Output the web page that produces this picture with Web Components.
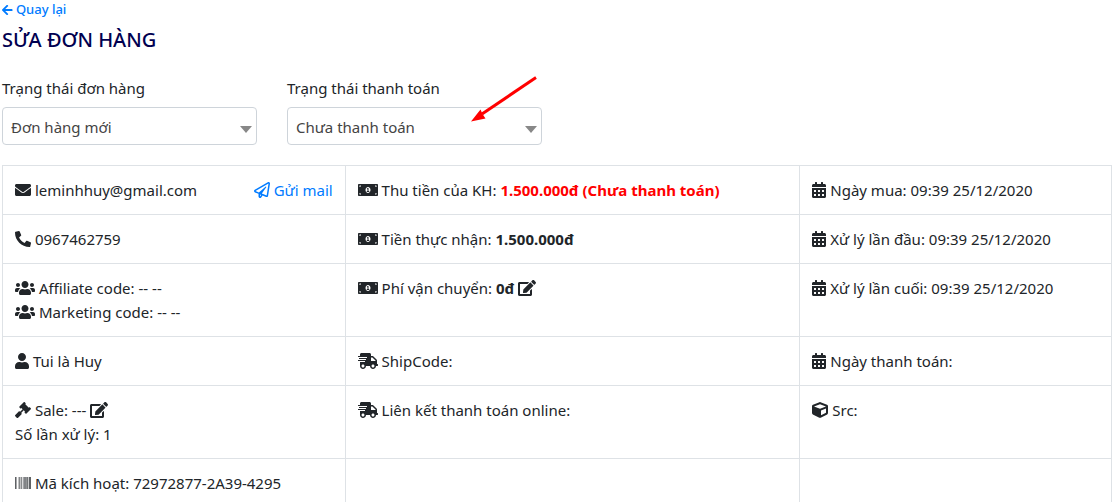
<!DOCTYPE html>
<html lang="vi">
<head>
<meta charset="utf-8">
<meta name="viewport" content="width=device-width, initial-scale=1">
<title>Sửa đơn hàng</title>
<style>
html { scrollbar-width: none; }
body { margin: 0; background: #fff; color: #212529; font: 15px/24px "Noto Sans", "Open Sans", sans-serif; }
</style>
</head>
<body>
<order-page></order-page>
<script>
const ICONS = {
  arrow: [448, 'M257.5 445.1l-22.2 22.2c-9.4 9.4-24.6 9.4-33.9 0L7 273c-9.4-9.4-9.4-24.6 0-33.9L201.4 44.7c9.4-9.4 24.6-9.4 33.9 0l22.2 22.2c9.5 9.5 9.3 25-.4 34.3L136.600 216H424c13.300 0 24 10.700 24 24v32c0 13.300-10.700 24-24 24H136.600l120.500 114.800c9.800 9.300 10 24.800.4 34.300z'],
  envelope: [512, 'M502.3 190.8c3.900-3.100 9.700-.2 9.700 4.700V400c0 26.500-21.500 48-48 48H48c-26.500 0-48-21.500-48-48V195.600c0-5 5.700-7.800 9.700-4.700 22.400 17.400 52.100 39.500 154.100 113.600 21.100 15.400 56.700 47.800 92.200 47.600 35.700.3 72-32.800 92.300-47.600 102-74.100 131.600-96.300 154-113.700zM256 320c23.200.4 56.600-29.200 73.400-41.400 132.700-96.300 142.800-104.700 173.400-128.700 5.800-4.500 9.200-11.500 9.200-18.900v-19c0-26.500-21.500-48-48-48H48c-26.500 0-48 21.500-48 48v19c0 7.400 3.400 14.300 9.200 18.900 30.600 23.900 40.700 32.400 173.400 128.700 16.800 12.200 50.200 41.800 73.400 41.400z'],
  plane: [512, 'M440 6.500L24 246.400c-34.400 19.900-31.100 70.800 5.700 85.900L144 379.600V464c0 46.400 59.200 65.500 86.600 28.600l43.800-59.100 111.900 46.200c5.900 2.400 12.100 3.600 18.300 3.600 8.200 0 16.300-2.100 23.600-6.200 12.800-7.200 21.600-20 23.900-34.500l59.400-387.200c6.100-40.100-36.900-68.800-71.500-48.900zM192 464v-64.600l36.600 15.100L192 464zm212.600-28.700l-153.800-63.500L391 169.500c10.700-15.500-9.500-33.500-23.700-21.200L155.800 332.600 48 288 464 48l-59.400 387.300z'],
  phone: [512, 'M493.400 24.600l-104-24c-11.300-2.600-22.900 3.300-27.500 13.900l-48 112c-4.200 9.800-1.400 21.300 6.900 28l60.600 49.600c-36 76.700-98.900 140.500-177.200 177.200l-49.600-60.600c-6.800-8.300-18.200-11.100-28-6.900l-112 48C3.900 366.500-2 378.100.6 389.400l24 104C27.100 504.200 36.700 512 48 512c256.100 0 464-207.500 464-464 0-11.200-7.700-20.900-18.600-23.400z', 'flip'],
  users: [640, 'M96 224c35.300 0 64-28.700 64-64s-28.700-64-64-64-64 28.700-64 64 28.700 64 64 64zm448 0c35.300 0 64-28.700 64-64s-28.700-64-64-64-64 28.700-64 64 28.700 64 64 64zm32 32h-64c-17.600 0-33.500 7.100-45.100 18.600 40.300 22.100 68.900 62 75.100 109.400h66c17.700 0 32-14.300 32-32v-32c0-35.300-28.700-64-64-64zm-256 0c61.900 0 112-50.100 112-112S381.900 32 320 32 208 82.100 208 144s50.100 112 112 112zm76.800 32h-8.300c-20.800 10-43.900 16-68.500 16s-47.600-6-68.500-16h-8.300C179.600 288 128 339.600 128 403.200V432c0 26.500 21.500 48 48 48h288c26.500 0 48-21.500 48-48v-28.800c0-63.600-51.600-115.200-115.200-115.200zm-223.700-13.400C161.500 263.100 145.600 256 128 256H64c-35.300 0-64 28.700-64 64v32c0 17.700 14.300 32 32 32h65.900c6.300-47.400 34.900-87.300 75.200-109.400z'],
  user: [448, 'M224 256c70.700 0 128-57.300 128-128S294.700 0 224 0 96 57.300 96 128s57.300 128 128 128zm89.600 32h-16.700c-22.200 10.200-46.900 16-72.900 16s-50.600-5.800-72.900-16h-16.700C60.200 288 0 348.200 0 422.400V464c0 26.500 21.500 48 48 48h352c26.500 0 48-21.500 48-48v-41.600c0-74.200-60.200-134.400-134.400-134.400z'],
  gavel: [512, 'M504.970 199.360l-22.630-22.630c-9.370-9.370-24.570-9.370-33.940 0l-5.660 5.660-113.130-113.130 5.660-5.660c9.370-9.370 9.370-24.570 0-33.940L312.640 7.030c-9.370-9.370-24.570-9.370-33.940 0L142.920 142.820c-9.370 9.370-9.370 24.570 0 33.940l22.630 22.630c9.370 9.370 24.570 9.370 33.940 0l5.660-5.660 39.600 39.600-81.040 81.040-5.660-5.660c-12.500-12.500-32.760-12.500-45.250 0L9.370 412.120c-12.500 12.500-12.500 32.760 0 45.250l45.250 45.250c12.500 12.500 32.760 12.500 45.250 0l103.430-103.430c12.500-12.500 12.500-32.760 0-45.250l-5.660-5.660 81.040-81.040 39.600 39.600-5.660 5.660c-9.370 9.370-9.370 24.570 0 33.940l22.630 22.630c9.370 9.370 24.570 9.370 33.940 0L504.970 233.300c9.370-9.370 9.370-24.560 0-33.940z'],
  edit: [576, 'M402.600 83.200l90.200 90.200c3.800 3.800 3.800 10 0 13.800L274.400 405.600l-92.800 10.300c-12.400 1.400-22.900-9.100-21.500-21.500l10.300-92.800L388.800 83.200c3.800-3.800 10-3.800 13.800 0zm162-22.900l-48.800-48.800c-15.200-15.200-39.900-15.200-55.200 0l-35.400 35.400c-3.800 3.800-3.800 10 0 13.800l90.200 90.200c3.800 3.800 10 3.800 13.800 0l35.400-35.400c15.200-15.300 15.200-40 0-55.200zM384 346.200V448H64V128h229.800c3.200 0 6.200-1.300 8.500-3.500l40-40c7.600-7.600 2.200-20.500-8.500-20.500H48C21.500 64 0 85.500 0 112v352c0 26.500 21.500 48 48 48h352c26.500 0 48-21.500 48-48V306.200c0-10.700-12.900-16-20.500-8.500l-40 40c-2.200 2.300-3.500 5.300-3.500 8.500z'],
  barcode: [512, 'M0 448V64h18v384H0zm26.857-.273V64H36v383.727h-9.143zm27.143 0V64h8.857v383.727H54zm44.857 0V64h8.857v383.727h-8.857zm36 0V64h17.714v383.727h-17.714zm44.857 0V64h8.857v383.727h-8.857zm18 0V64h8.857v383.727h-8.857zm18 0V64h8.857v383.727h-8.857zm35.715 0V64h18v383.727h-18zm44.857 0V64h18v383.727h-18zm35.999 0V64h18.001v383.727h-18.001zm36.001 0V64h18.001v383.727h-18.001zm26.857 0V64h18v383.727h-18zm45.143 0V64h26.857v383.727h-26.857zm35.714 0V64h9.143v383.727H476zm18 .273V64h18v384h-18z'],
  money: [640, 'M608 64H32C14.330 64 0 78.330 0 96v320c0 17.670 14.330 32 32 32h576c17.670 0 32-14.330 32-32V96c0-17.670-14.330-32-32-32zM48 400v-50c28 0 50 22 50 50H48zm0-238v-50h50c0 28-22 50-50 50zm272 190c-44.190 0-80-42.990-80-96 0-53.020 35.820-96 80-96s80 42.980 80 96c0 53.030-35.830 96-80 96zm272 48h-50c0-28 22-50 50-50v50zm0-238c-28 0-50-22-50-50h50v50zM352 288h-16v-88c0-4.420-3.580-8-8-8h-13.580c-4.740 0-9.370 1.400-13.310 4.030l-15.330 10.220a7.994 7.994 0 0 0-2.220 11.090l8.880 13.310a7.994 7.994 0 0 0 11.090 2.220l.47-.31V288h-16c-4.420 0-8 3.580-8 8v16c0 4.420 3.580 8 8 8h64c4.420 0 8-3.580 8-8v-16c0-4.420-3.580-8-8-8z'],
  truck: [640, 'M624 352h-16V243.900c0-12.700-5.100-24.900-14.100-33.900L494 110.100c-9-9-21.200-14.100-33.900-14.100H416V48c0-26.500-21.500-48-48-48H112C85.500 0 64 21.500 64 48v48H8c-4.400 0-8 3.600-8 8v16c0 4.400 3.600 8 8 8h272c4.400 0 8 3.600 8 8v16c0 4.400-3.600 8-8 8H40c-4.400 0-8 3.600-8 8v16c0 4.400 3.600 8 8 8h208c4.400 0 8 3.600 8 8v16c0 4.400-3.600 8-8 8H8c-4.400 0-8 3.600-8 8v16c0 4.400 3.600 8 8 8h208c4.400 0 8 3.600 8 8v16c0 4.400-3.600 8-8 8H64v128c0 53 43 96 96 96s96-43 96-96h128c0 53 43 96 96 96s96-43 96-96h48c8.800 0 16-7.200 16-16v-32c0-8.800-7.200-16-16-16zM160 464c-26.500 0-48-21.500-48-48s21.500-48 48-48 48 21.500 48 48-21.500 48-48 48zm320 0c-26.500 0-48-21.500-48-48s21.500-48 48-48 48 21.500 48 48-21.500 48-48 48zm80-208H416V144h44.100l99.900 99.900V256z'],
  calendar: [448, 'M0 464c0 26.500 21.500 48 48 48h352c26.500 0 48-21.500 48-48V192H0v272zm320-196c0-6.600 5.400-12 12-12h40c6.600 0 12 5.400 12 12v40c0 6.600-5.400 12-12 12h-40c-6.600 0-12-5.400-12-12v-40zm0 128c0-6.600 5.400-12 12-12h40c6.600 0 12 5.400 12 12v40c0 6.600-5.400 12-12 12h-40c-6.600 0-12-5.400-12-12v-40zM192 268c0-6.600 5.400-12 12-12h40c6.600 0 12 5.400 12 12v40c0 6.600-5.400 12-12 12h-40c-6.600 0-12-5.400-12-12v-40zm0 128c0-6.600 5.400-12 12-12h40c6.600 0 12 5.400 12 12v40c0 6.600-5.400 12-12 12h-40c-6.600 0-12-5.400-12-12v-40zM64 268c0-6.600 5.400-12 12-12h40c6.600 0 12 5.400 12 12v40c0 6.600-5.400 12-12 12H76c-6.600 0-12-5.400-12-12v-40zm0 128c0-6.600 5.400-12 12-12h40c6.600 0 12 5.400 12 12v40c0 6.600-5.400 12-12 12H76c-6.600 0-12-5.400-12-12v-40zM400 64h-48V16c0-8.800-7.200-16-16-16h-32c-8.800 0-16 7.200-16 16v48H160V16c0-8.800-7.200-16-16-16h-32c-8.800 0-16 7.200-16 16v48H48C21.500 64 0 85.500 0 112v48h448v-48c0-26.500-21.500-48-48-48z'],
  cube: [512, 'M239.100 6.300l-208 78c-18.700 7-31.100 25-31.100 45v225.100c0 18.200 10.300 34.800 26.500 42.900l208 104c13.500 6.800 29.400 6.800 42.900 0l208-104c16.300-8.100 26.500-24.800 26.500-42.900V129.300c0-20-12.400-37.900-31.100-44.900l-208-78C262 2.200 250 2.200 239.100 6.300zM256 68.400l192 72v1.100l-192 78-192-78v-1.100l192-72zm32 356V275.500l160-65v133.900l-160 80z']
};

class FaIcon extends HTMLElement {
  connectedCallback() {
    const [width, path, flip] = ICONS[this.getAttribute('name')];
    this.attachShadow({ mode: 'open' }).innerHTML = `
      <style>
        :host { display: inline-block; font-size: var(--icon-size, 16px); height: 1em; line-height: 1; vertical-align: -2px; }
        svg { display: block; height: 1em; fill: currentColor; }
        .flip { transform: scaleX(-1); }
      </style>
      <svg class="${flip || ''}" viewBox="0 0 ${width} 512" aria-hidden="true"><path d="${path}"/></svg>`;
  }
}
customElements.define('fa-icon', FaIcon);

class StatusField extends HTMLElement {
  connectedCallback() {
    const options = this.getAttribute('options').split('|').map(o => `<option>${o}</option>`).join('');
    this.attachShadow({ mode: 'open' }).innerHTML = `
      <style>
        :host { display: block; position: relative; }
        label { display: block; margin-bottom: 7px; }
        .box { display: grid; align-items: center; }
        .box > * { grid-area: 1 / 1; }
        select { appearance: none; box-sizing: border-box; width: 100%; height: 38px; margin: 0; padding: 2px 24px 0 8px;
          border: 1px solid #ced4da; border-radius: 4px; background: #fff; color: #444; font: inherit; }
        .caret { justify-self: end; margin: 6px 5px 0 0; border: 6px solid transparent; border-top: 7px solid #888;
          border-bottom: 0; pointer-events: none; }
      </style>
      <label for="status">${this.getAttribute('label')}</label>
      <div class="box"><select id="status">${options}</select><span class="caret"></span></div>
      <slot></slot>`;
  }
}
customElements.define('status-field', StatusField);

class PointerArrow extends HTMLElement {
  connectedCallback() {
    this.attachShadow({ mode: 'open' }).innerHTML = `
      <style>
        :host { display: block; position: absolute; top: 0; right: 4px; pointer-events: none; }
        svg { display: block; }
      </style>
      <svg width="68" height="48" viewBox="0 0 68 48" aria-hidden="true">
        <path d="M66 1.500L12 38" stroke="#f00" stroke-width="3"/>
        <path d="M1 45.500L10.500 33.500L12.500 38L15.500 42.500Z" fill="#f00"/>
      </svg>`;
  }
}
customElements.define('pointer-arrow', PointerArrow);

class OrderDetails extends HTMLElement {
  connectedCallback() {
    this.attachShadow({ mode: 'open' }).innerHTML = `
      <style>
        :host { display: block; }
        table { width: 100%; table-layout: fixed; border-collapse: collapse; }
        .contact { width: 30.9%; }
        .dates { width: 28.1%; }
        td { padding: 12px; border: 1px solid #dee2e6; vertical-align: top; }
        .split { display: flex; justify-content: space-between; }
        a { color: #007bff; text-decoration: none; }
        .due { color: #f00; }
        button { padding: 0; border: 0; background: none; color: inherit; font: inherit; cursor: pointer; }
      </style>
      <table>
        <colgroup><col class="contact"><col><col class="dates"></colgroup>
        <tbody>
          <tr>
            <td><div class="split"><span><fa-icon name="envelope"></fa-icon> leminhhuy@gmail.com</span><a href="#mail"><fa-icon name="plane"></fa-icon> Gửi mail</a></div></td>
            <td><fa-icon name="money"></fa-icon> Thu tiền của KH: <b class="due">1.500.000đ (Chưa thanh toán)</b></td>
            <td><fa-icon name="calendar"></fa-icon> Ngày mua: 09:39 25/12/2020</td>
          </tr>
          <tr>
            <td><fa-icon name="phone"></fa-icon> 0967462759</td>
            <td><fa-icon name="money"></fa-icon> Tiền thực nhận: <b>1.500.000đ</b></td>
            <td><fa-icon name="calendar"></fa-icon> Xử lý lần đầu: 09:39 25/12/2020</td>
          </tr>
          <tr>
            <td><fa-icon name="users"></fa-icon> Affiliate code: -- --<br><fa-icon name="users"></fa-icon> Marketing code: -- --</td>
            <td><fa-icon name="money"></fa-icon> Phí vận chuyển: <b>0đ</b> <button type="button" aria-label="Sửa phí vận chuyển"><fa-icon name="edit"></fa-icon></button></td>
            <td><fa-icon name="calendar"></fa-icon> Xử lý lần cuối: 09:39 25/12/2020</td>
          </tr>
          <tr>
            <td><fa-icon name="user"></fa-icon> Tui là Huy</td>
            <td><fa-icon name="truck"></fa-icon> ShipCode:</td>
            <td><fa-icon name="calendar"></fa-icon> Ngày thanh toán:</td>
          </tr>
          <tr>
            <td><fa-icon name="gavel"></fa-icon> Sale: --- <button type="button" aria-label="Sửa sale"><fa-icon name="edit"></fa-icon></button><br>Số lần xử lý: 1</td>
            <td><fa-icon name="truck"></fa-icon> Liên kết thanh toán online:</td>
            <td><fa-icon name="cube"></fa-icon> Src:</td>
          </tr>
          <tr>
            <td><fa-icon name="barcode"></fa-icon> Mã kích hoạt: 72972877-2A39-4295</td>
            <td></td>
            <td></td>
          </tr>
        </tbody>
      </table>`;
  }
}
customElements.define('order-details', OrderDetails);

class OrderPage extends HTMLElement {
  connectedCallback() {
    this.attachShadow({ mode: 'open' }).innerHTML = `
      <style>
        :host { display: block; padding: 0 2px; }
        .back { display: block; width: fit-content; --icon-size: 12px; color: #007bff; font-size: 13px; font-weight: 500;
          line-height: 18px; text-decoration: none; }
        h1 { margin: 10px 0 24px; color: #000050; font-size: 20px; font-weight: 500; line-height: 24px; }
        .fields { display: grid; grid-template-columns: repeat(4, 1fr); gap: 30px; margin-bottom: 20px; }
      </style>
      <a class="back" href="#orders"><fa-icon name="arrow"></fa-icon> Quay lại</a>
      <h1>SỬA ĐƠN HÀNG</h1>
      <div class="fields">
        <status-field label="Trạng thái đơn hàng" options="Đơn hàng mới|Đang xử lý|Hoàn thành"></status-field>
        <status-field label="Trạng thái thanh toán" options="Chưa thanh toán|Đã thanh toán"><pointer-arrow></pointer-arrow></status-field>
      </div>
      <order-details></order-details>`;
  }
}
customElements.define('order-page', OrderPage);
</script>
</body>
</html>
